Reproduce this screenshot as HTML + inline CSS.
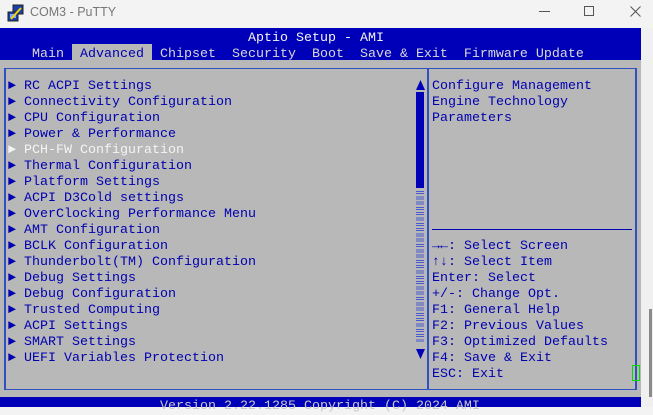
<!DOCTYPE html>
<html><head><meta charset="utf-8"><style>
*{margin:0;padding:0;box-sizing:border-box}
body{width:653px;height:407px;overflow:hidden;background:#f3f3f3;position:relative;font-family:"Liberation Mono",monospace}
.t{position:absolute;font-size:13.33px;line-height:16px;white-space:pre;color:#0000b0;margin-top:3px}
.w{color:#f4f4f4}
.ab{position:absolute}
</style></head><body>
<div class="ab" style="left:0;top:0;width:653px;height:28px;background:#f3f3f3"></div>
<svg class="ab" style="left:7px;top:4px" width="18" height="18" viewBox="0 0 18 18">
<rect x="6" y="1" width="10" height="9" fill="#1a3fa8" stroke="#222" stroke-width="1"/>
<rect x="1" y="8" width="10" height="9" fill="#1a3fa8" stroke="#222" stroke-width="1"/>
<rect x="3" y="10" width="6" height="4" fill="#7fa6ff"/>
<path d="M4 15 L14 4" stroke="#f6d000" stroke-width="2"/>
</svg>
<div class="ab" style="left:30px;top:5px;font-family:'Liberation Sans',sans-serif;font-size:12.5px;color:#777">COM3 - PuTTY</div>
<div class="ab" style="left:539px;top:11px;width:11px;height:1px;background:#555"></div>
<div class="ab" style="left:584px;top:6px;width:10px;height:10px;border:1px solid #555"></div>
<svg class="ab" style="left:630px;top:6px" width="11" height="11"><path d="M0.5 0.5L10.5 10.5M10.5 0.5L0.5 10.5" stroke="#555" stroke-width="1"/></svg>
<div class="ab" style="left:0;top:28px;width:641px;height:379px;background:#b8b8b8"></div>
<div class="ab" style="left:0;top:28px;width:641px;height:32px;background:#0000b8"></div>
<div class="ab" style="left:0;top:397px;width:641px;height:10px;background:#0000b8"></div>
<div class="ab" style="left:72px;top:44px;width:80px;height:16px;background:#b8b8b8"></div>
<div class="ab" style="left:641px;top:28px;width:12px;height:379px;background:#f0f0f0"></div>
<div class="ab" style="left:649px;top:309px;width:3px;height:88px;background:#8a8a8a"></div>
<div class="ab" style="left:4px;top:68px;width:633px;height:322px;border:1px solid #3050c0;border-left:2px solid #3050c0;border-right:2px solid #3050c0"></div>
<div class="ab" style="left:427px;top:69px;width:2px;height:320px;background:#3050c0"></div>
<div class="ab" style="left:432px;top:229px;width:200px;height:1px;background:#0000b0"></div>
<div class="ab" style="left:416px;top:92px;width:8px;height:96px;background:#0000b8"></div>
<div class="ab" style="left:416px;top:190px;width:8px;height:152px;background:repeating-linear-gradient(#b8b8b8 0 1px,#4a5ad0 1px 2px,#b8b8b8 2px 3px,#4a5ad0 3px 4px,#b8b8b8 4px 5.3px)"></div>
<svg class="ab" style="left:416px;top:80px" width="9" height="10"><path d="M4.5 0L9 10H0Z" fill="#0000b8"/></svg>
<svg class="ab" style="left:416px;top:349px" width="9" height="10"><path d="M0 0H9L4.5 10Z" fill="#0000b8"/></svg>
<div class="ab" style="left:632px;top:365px;width:8px;height:16px;border:1px solid #00e000"></div>
<div class="t w" style="left:248px;top:28px">Aptio Setup - AMI</div>
<div class="t" style="left:32px;top:44px;color:#d8d8d8">Main  <span style="color:#0000b0">Advanced</span>  Chipset  Security  Boot  Save &amp; Exit  Firmware Update</div>
<div class="t" style="left:8px;top:76px">► RC ACPI Settings
► Connectivity Configuration
► CPU Configuration
► Power &amp; Performance
<span class="w">► PCH-FW Configuration</span>
► Thermal Configuration
► Platform Settings
► ACPI D3Cold settings
► OverClocking Performance Menu
► AMT Configuration
► BCLK Configuration
► Thunderbolt(TM) Configuration
► Debug Settings
► Debug Configuration
► Trusted Computing
► ACPI Settings
► SMART Settings
► UEFI Variables Protection</div>
<div class="t" style="left:432px;top:76px">Configure Management
Engine Technology
Parameters</div>
<div class="t" style="left:432px;top:236px">→←: Select Screen
↑↓: Select Item
Enter: Select
+/-: Change Opt.
F1: General Help
F2: Previous Values
F3: Optimized Defaults
F4: Save &amp; Exit
ESC: Exit</div>
<div class="t" style="left:160px;top:396px;color:#c8c8c8">Version 2.22.1285 Copyright (C) 2024 AMI</div>
</body></html>
